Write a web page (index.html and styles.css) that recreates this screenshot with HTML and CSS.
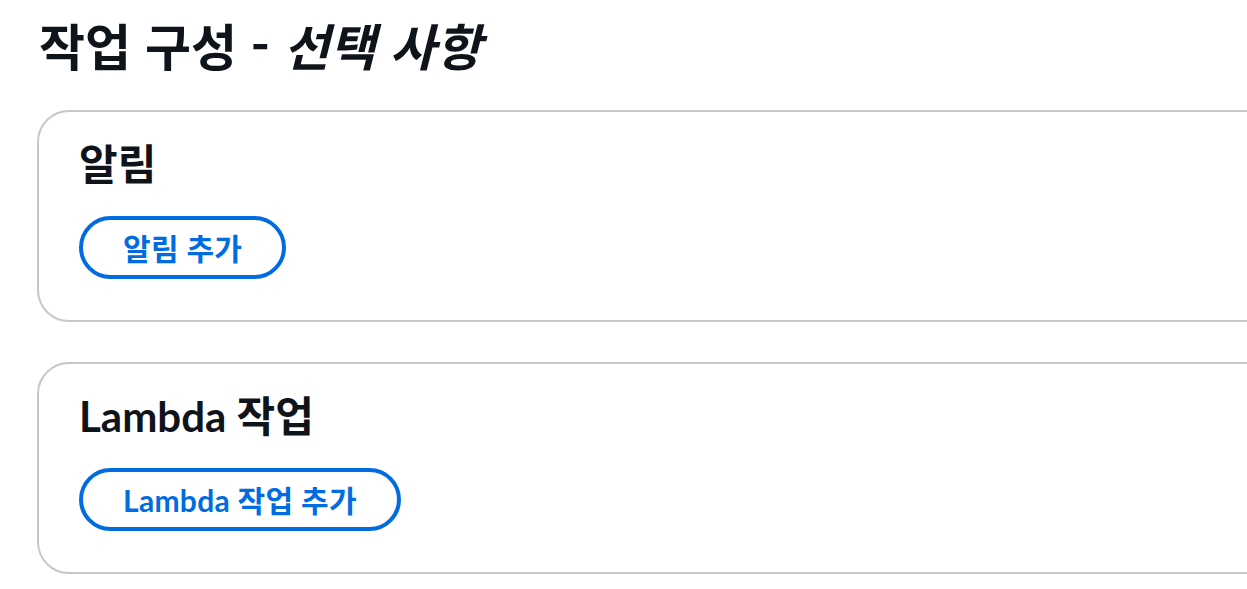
FILE: index.html
```html
<!DOCTYPE html>
<html lang="ko">
<head>
<meta charset="utf-8">
<link rel="stylesheet" href="styles.css">
</head>
<body>
<main class="page">
  <h1 class="page-title">작업 구성 - <i class="optional">선택 사항</i></h1>
  <section class="card">
    <h2 class="card-title">알림</h2>
    <div class="card-actions"><button class="btn">알림 추가</button></div>
  </section>
  <section class="card">
    <h2 class="card-title">Lambda 작업</h2>
    <div class="card-actions"><button class="btn">Lambda 작업 추가</button></div>
  </section>
</main>
</body>
</html>
```
FILE: styles.css
```css
html, body {
  margin: 0;
  padding: 0;
  background: #ffffff;
  overflow: hidden;
}
body {
  font-family: Lato, "Noto Sans CJK KR", sans-serif;
  color: #0f141a;
}
.page {
  padding: 14px 0 0 37px;
  width: 1260px;
  display: flex;
  flex-direction: column;
  gap: 40px;
}
.page-title {
  margin: 0 0 -4px 2px;
  font-family: "Noto Sans CJK KR", sans-serif;
  font-size: 50px;
  line-height: 60px;
  font-weight: 700;
}
.optional {
  font-style: italic;
}
.card {
  border: 2px solid #c6c6cd;
  border-radius: 32px;
  padding: 28px 40px 41px;
  display: flex;
  flex-direction: column;
  gap: 28px;
}
.card-title {
  margin: 0;
  font-size: 42px;
  line-height: 48px;
  font-weight: 700;
}
.card-actions {
  display: flex;
}
.btn {
  font-family: Lato, "Noto Sans CJK KR", sans-serif;
  font-size: 30px;
  font-weight: 700;
  line-height: 40px;
  letter-spacing: 0.3px;
  color: #006ce0;
  background: #ffffff;
  border: 4px solid #006ce0;
  border-radius: 40px;
  padding: 8px 40px;
  height: 63px;
}
```
